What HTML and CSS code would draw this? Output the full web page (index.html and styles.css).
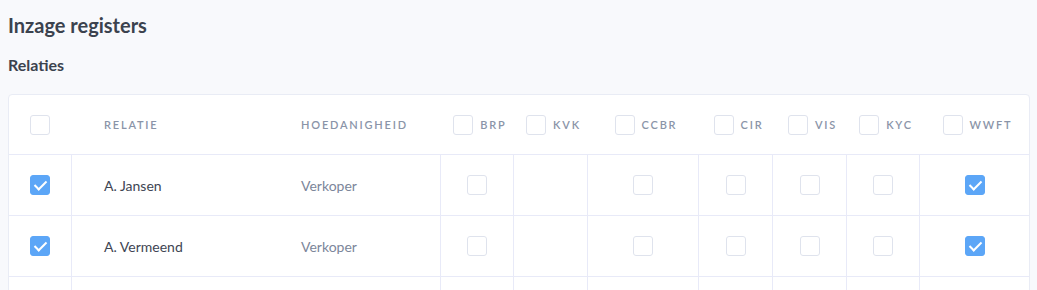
FILE: index.html
```html
<!DOCTYPE html>
<html lang="nl">
<head>
<meta charset="UTF-8">
<meta name="viewport" content="width=device-width, initial-scale=1.0">
<title>Inzage registers</title>
<link rel="stylesheet" href="styles.css">
</head>
<body>
<div class="page">
    <h1 class="title">Inzage registers</h1>
    <h2 class="subtitle">Relaties</h2>

    <div class="card">
        <!-- kop -->
        <div class="row head">
            <div class="cell c-check"><span class="box"></span></div>
            <div class="cell c-name"><span class="label">Relatie</span></div>
            <div class="cell c-role"><span class="label">Hoedanigheid</span></div>
            <div class="cell c-reg"><span class="box"></span><span class="label">BRP</span></div>
            <div class="cell c-reg"><span class="box"></span><span class="label">KVK</span></div>
            <div class="cell c-reg"><span class="box"></span><span class="label">CCBR</span></div>
            <div class="cell c-reg"><span class="box"></span><span class="label">CIR</span></div>
            <div class="cell c-reg"><span class="box"></span><span class="label">VIS</span></div>
            <div class="cell c-reg"><span class="box"></span><span class="label">KYC</span></div>
            <div class="cell c-reg"><span class="box"></span><span class="label">WWFT</span></div>
        </div>

        <div class="row">
            <div class="cell c-check"><span class="box checked"></span></div>
            <div class="cell c-name line">A. Jansen</div>
            <div class="cell c-role">Verkoper</div>
            <div class="cell c-reg line"><span class="box"></span></div>
            <div class="cell c-reg line"></div>
            <div class="cell c-reg line"><span class="box"></span></div>
            <div class="cell c-reg line"><span class="box"></span></div>
            <div class="cell c-reg line"><span class="box"></span></div>
            <div class="cell c-reg line"><span class="box"></span></div>
            <div class="cell c-reg line"><span class="box checked"></span></div>
        </div>

        <div class="row">
            <div class="cell c-check"><span class="box checked"></span></div>
            <div class="cell c-name line">A. Vermeend</div>
            <div class="cell c-role">Verkoper</div>
            <div class="cell c-reg line"><span class="box"></span></div>
            <div class="cell c-reg line"></div>
            <div class="cell c-reg line"><span class="box"></span></div>
            <div class="cell c-reg line"><span class="box"></span></div>
            <div class="cell c-reg line"><span class="box"></span></div>
            <div class="cell c-reg line"><span class="box"></span></div>
            <div class="cell c-reg line"><span class="box checked"></span></div>
        </div>

        <div class="row">
            <div class="cell c-check"></div>
            <div class="cell c-name line"></div>
            <div class="cell c-role"></div>
            <div class="cell c-reg line"></div>
            <div class="cell c-reg line"></div>
            <div class="cell c-reg line"></div>
            <div class="cell c-reg line"></div>
            <div class="cell c-reg line"></div>
            <div class="cell c-reg line"></div>
            <div class="cell c-reg line"></div>
        </div>
    </div>
</div>
</body>
</html>
```

FILE: styles.css
```css
body{
    margin: 0;
    background-color: #f8f9fc;
    font-family: Lato, "Open Sans", sans-serif;
    color: #3e4553;
}
.page{
    padding: 13px 7px 0 8px;
}
.title{
    margin: 0;
    font-size: 20px;
    line-height: 24px;
    font-weight: 700;
    color: #3b424e;
}
.subtitle{
    margin: 18px 0 0 0;
    font-size: 16px;
    line-height: 20px;
    font-weight: 700;
    color: #3b424e;
}
.card{
    margin-top: 19px;
    width: 1022px;
    box-sizing: border-box;
    background-color: #fff;
    border: 1px solid #e9ecf5;
    border-radius: 4px;
    height: 220px;
    overflow: hidden;
}
.row{
    display: grid;
    grid-template-columns: 62px 197px 172px 73px 74px 111px 74px 74px 73px 110px;
    height: 60px;
    border-bottom: 1px solid #e8eaf8;
}
.row.head{
    height: 59px;
}
.cell{
    display: flex;
    align-items: center;
    box-sizing: border-box;
    border-left: 1px solid transparent;
    font-size: 14px;
}
.cell.line{
    border-left-color: #e8eaf8;
}
.c-check{
    justify-content: center;
    border-left: none;
}
.c-name{
    padding-left: 32px;
    color: #3e4553;
}
.c-role{
    padding-left: 32px;
    color: #7c869a;
}
.c-reg{
    justify-content: center;
}
.head .c-reg{
    padding-left: 6px;
}
.label{
    font-size: 11px;
    font-weight: 600;
    letter-spacing: 1.8px;
    text-transform: uppercase;
    color: #8a94a8;
}
.c-reg .label{
    margin-left: 7px;
}
.box{
    display: inline-block;
    width: 20px;
    height: 20px;
    box-sizing: border-box;
    border: 1px solid #dfe3ed;
    border-radius: 3px;
    background-color: #fff;
}
.box.checked{
    border-color: #5ca6f7;
    background-color: #5ca6f7;
    position: relative;
}
.box.checked::after{
    content: "";
    position: absolute;
    left: 6px;
    top: 2px;
    width: 5px;
    height: 10px;
    border-right: 2px solid #fff;
    border-bottom: 2px solid #fff;
    transform: rotate(45deg);
}
```
